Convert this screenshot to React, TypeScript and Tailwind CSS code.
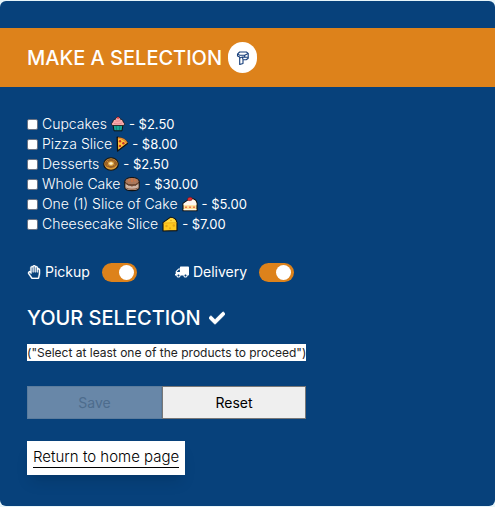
import { useState } from "react";
import type { ReactNode } from "react";
import { FaCheck, FaRegHandPaper, FaTruck } from "react-icons/fa";

function Cupcake() {
  return (
    <svg viewBox="0 0 14 16" className="h-4 w-3.5" aria-hidden="true">
      <path d="M2 8.5h10l-1 6.3H3z" fill="#16a394" stroke="#111" strokeWidth="1" />
      <path d="M5.2 10l.4 4M8.8 10l-.4 4" stroke="#08776f" strokeWidth=".8" />
      <path d="M1.5 9.5C0 8.8.3 6.6 1.8 6.1 1.8 4.2 3 3.3 4.3 3.4 4.8 1.7 6 1 7 1s2.2.7 2.7 2.4c1.3-.1 2.5.8 2.5 2.7 1.5.5 1.8 2.7.3 3.4z" fill="#f7a9ab" stroke="#111" strokeWidth=".8" />
      <path d="M3 7.4c2.5.8 5.5.6 8-.4M4.5 5c1.6.4 3.4.2 4.8-.3" stroke="#df7f88" strokeWidth=".8" fill="none" />
      <circle cx="7" cy="1.8" r="1.1" fill="#e23b45" />
    </svg>
  );
}

function Pizza() {
  return (
    <svg viewBox="0 0 12 16" className="h-4 w-3" aria-hidden="true">
      <path d="M1.2 1.2C5.5 1.5 10.2 4 11.4 7.6L1.6 15z" fill="#ffc43b" stroke="#111" strokeWidth="1.3" strokeLinejoin="round" />
      <path d="M2 2c4 .2 7.7 2.4 9 5.2" stroke="#e58b34" strokeWidth="1.6" fill="none" />
      <circle cx="4" cy="5.3" r="1.2" fill="#c4302b" />
      <circle cx="7.4" cy="7.2" r="1.2" fill="#c4302b" />
      <circle cx="4" cy="10" r="1.2" fill="#c4302b" />
    </svg>
  );
}

function Donut() {
  return (
    <svg viewBox="0 0 16 16" className="size-4" aria-hidden="true">
      <ellipse cx="8" cy="8" rx="7.3" ry="6.3" fill="#d99a35" stroke="#111" strokeWidth="1.1" />
      <path d="M1.7 7.8C2 4.7 5 3 8 3s6 1.7 6.3 4.8c-.4 2-1.6 1.8-2.4 2.8-1.1 1.5-2.3.8-3.7 1.4-1.6.5-2.3-.8-3.7-.9-1.2 0-2.4-1.4-2.8-3.3z" fill="#9a6128" />
      <ellipse cx="8" cy="7.5" rx="2.4" ry="1.8" fill="#fff2cf" stroke="#e4ae43" strokeWidth="1.1" />
      <path d="M4 6l1-.8M10.5 5l1 .8M4.2 9l1 .4M11 9.3l.9-.7" stroke="#d99537" strokeWidth=".8" />
    </svg>
  );
}

function Cake() {
  return (
    <svg viewBox="0 0 16 16" className="size-4" aria-hidden="true">
      <path d="M.8 5.5v6c0 4.2 14.4 4.2 14.4 0v-6z" fill="#d0b5a4" stroke="#111" strokeWidth="1.1" />
      <path d="M1.5 11.5c2 2.3 11 2.3 13 0" stroke="#8b5b42" strokeWidth="1" fill="none" />
      <ellipse cx="8" cy="5.3" rx="7.2" ry="3.9" fill="#a9785c" stroke="#111" strokeWidth="1" />
      <path d="M1.5 6v2.3l1.5-.2 1.4 1.7L6 9.3l2 1.4 1.7-1.4 2 .6 1.3-1.8 1.5.2V6c-2 3.4-11 3.4-13 0z" fill="#75482f" />
      <path d="M5 3v2.6M8 2v4M11 3v2.6" stroke="#e2763d" strokeWidth="1" />
    </svg>
  );
}

function CakeSlice() {
  return (
    <svg viewBox="0 0 16 16" className="size-4" aria-hidden="true">
      <path d="M1 7.5L8.5 2.2c3.5.2 6 2.2 6.5 4.8v7.7H1z" fill="#ffdc91" stroke="#111" strokeWidth="1.1" strokeLinejoin="round" />
      <path d="M1.6 7.5L8.6 2.8c3 .2 5.3 2 5.8 4.4v2H1.6z" fill="#fff7ef" />
      <path d="M1.6 13.6h12.8" stroke="#fff7e8" strokeWidth="1.2" />
      <path d="M3 11.2h2M7 11.2h2M11 11.2h2" stroke="#ee7650" strokeWidth="1.4" />
      <path d="M5.5 4C5.4 2.1 6.8 1 8.6 1.3c1.8.4 2.2 1.7 1.4 2.6-1.3.9-3.6 1-4.5.1z" fill="#e23036" stroke="#611" strokeWidth=".5" />
    </svg>
  );
}

function Cheese() {
  return (
    <svg viewBox="0 0 16 16" className="size-4" aria-hidden="true">
      <path d="M1 6.8L8.7 1.3c3.4.5 5.7 2.4 6.3 5.3v8L1 15z" fill="#ffc91f" stroke="#111" strokeWidth="1.1" strokeLinejoin="round" />
      <path d="M1.6 6.8l7.2-5c2.9.5 4.9 2.1 5.5 4.6z" fill="#ffd840" />
      <path d="M1.5 7.1l13-.4" stroke="#e6a315" strokeWidth=".7" />
      <g fill="#e8a516">
        <circle cx="4.5" cy="10" r="1.2" />
        <circle cx="11.8" cy="9.5" r="1.2" />
        <circle cx="8" cy="12.3" r="1" />
        <circle cx="9" cy="4.5" r=".8" />
      </g>
    </svg>
  );
}

const products: { name: string; price: string; icon: ReactNode }[] = [
  { name: "Cupcakes", price: "$2.50", icon: <Cupcake /> },
  { name: "Pizza Slice", price: "$8.00", icon: <Pizza /> },
  { name: "Desserts", price: "$2.50", icon: <Donut /> },
  { name: "Whole Cake", price: "$30.00", icon: <Cake /> },
  { name: "One (1) Slice of Cake", price: "$5.00", icon: <CakeSlice /> },
  { name: "Cheesecake Slice", price: "$7.00", icon: <Cheese /> },
];

function Toggle({ label, icon }: { label: string; icon: ReactNode }) {
  const [on, setOn] = useState(true);
  return (
    <label className="flex items-center text-sm">
      {icon}
      <span className="ml-1">{label}</span>
      <input
        type="checkbox"
        checked={on}
        onChange={() => setOn(!on)}
        className="ml-3 h-[19px] w-[35px] appearance-none rounded-full bg-gray-400 px-[3px] py-0.5 before:block before:size-[15px] before:rounded-full before:bg-white checked:bg-[#dd821b] checked:before:ml-auto"
      />
    </label>
  );
}

export default function App() {
  return (
    <div className="bg-[#e6f5fa] py-px font-['Inter','Liberation_Sans',sans-serif] text-white">
      <main className="rounded-md bg-[#07417b] pt-[27px] pb-[31px]">
        <header className="flex h-[59px] items-center gap-1.5 bg-[#dd821b] px-[27px]">
          <h1 className="text-xl font-medium">MAKE A SELECTION</h1>
          <span className="flex h-[31px] w-[29px] items-center justify-center rounded-full bg-white">
            <svg viewBox="0 0 14 16" className="h-4 w-3.5" fill="none" stroke="#173f7b" strokeWidth="1.1" strokeLinejoin="round" aria-hidden="true">
              <path d="M1.5 4.2L3.6 2h6.8l1.8 1.4v4.8l-2 1.5H7v3.7l-3.3 1.1V7L1.5 6z" />
              <path d="M1.5 4.2l2.4 1.1h4.8l3.5-1.9M8.7 5.3v1.8H6.4L3.7 8M8.7 7.1l3.5.2M6.4 7.1L7 9.7" />
            </svg>
          </span>
        </header>

        <form className="px-[27px] pt-[27px]" onSubmit={(event) => event.preventDefault()}>
          <ul>
            {products.map((product) => (
              <li key={product.name} className="h-5">
                <label className="flex h-5 items-center gap-1 text-sm whitespace-nowrap">
                  <input type="checkbox" className="size-[11px] appearance-none rounded-xs border border-gray-500 bg-white checked:bg-[#dd821b]" />
                  <span className="font-light">{product.name}</span>
                  {product.icon}
                  <span className="text-[13px]">- {product.price}</span>
                </label>
              </li>
            ))}
          </ul>

          <div className="mt-7 flex gap-[38px]">
            <Toggle label="Pickup" icon={<FaRegHandPaper className="size-3.5 stroke-current stroke-[8px]" />} />
            <Toggle label="Delivery" icon={<FaTruck className="size-3.5 -scale-x-100" />} />
          </div>

          <h2 className="mt-[22px] flex items-center gap-2 text-xl leading-7 font-medium">
            YOUR SELECTION <FaCheck className="size-4 stroke-current stroke-[32px]" />
          </h2>
          <p className="mt-3 w-fit bg-white text-xs leading-[17px] whitespace-nowrap text-[#222]">
            ("Select at least one of the products to proceed")
          </p>

          <div className="mt-[25px] grid max-w-[279px] grid-cols-[135fr_144fr] text-sm">
            <button type="submit" disabled className="h-[33px] border border-[#5b7c9d] bg-[#6887a8] text-[#4d6c8d]">
              Save
            </button>
            <button type="reset" className="h-[33px] border border-[#777] bg-[#efefef] text-black">
              Reset
            </button>
          </div>

          <a href="#home" className="mt-[22px] block w-fit bg-white px-1.5 pt-1.5 pb-[7px] text-[15px] font-light text-black shadow-lg">
            <span className="block border-b border-black leading-5">Return to home page</span>
          </a>
        </form>
      </main>
    </div>
  );
}
